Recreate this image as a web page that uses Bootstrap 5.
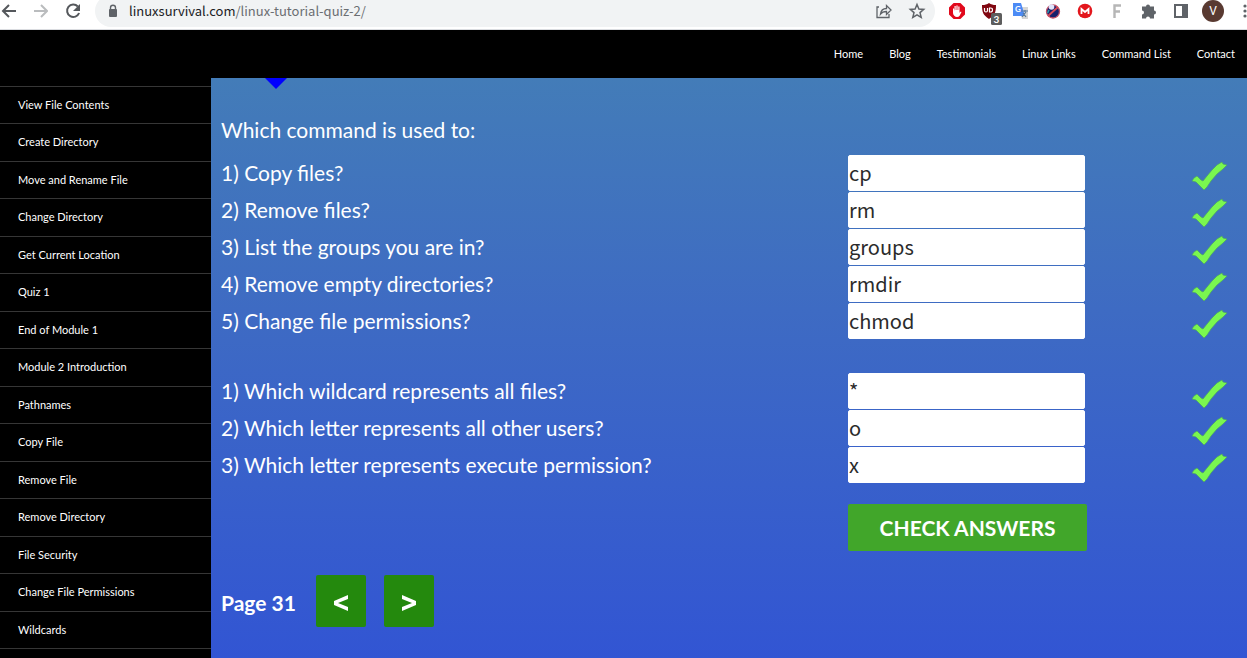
<!DOCTYPE html>
<html lang="en">
<head>
<meta charset="utf-8">
<meta name="viewport" content="width=device-width, initial-scale=1">
<title>Linux Survival - Quiz 2</title>
<link href="https://cdn.jsdelivr.net/npm/bootstrap@5.3.0/dist/css/bootstrap.min.css" rel="stylesheet">
<style>
  body { font-family: Lato, "Liberation Sans", sans-serif; background: #000; color: #fff; }

  /* Browser toolbar */
  .toolbar { height: 30px; background: #fff; border-bottom: 1px solid #dadce0; overflow: hidden; padding-bottom: 7px; }
  .tool-btn { width: 20px; height: 20px; flex: none; padding: 0; border: 0; background: none; display: block; line-height: 0; }
  .tool-btn svg { display: block; width: 20px; height: 20px; }
  .menu-btn { width: 12px; }
  .tool-group { gap: 12px; }
  .address { height: 32px; background: #f1f3f4; border-radius: 16px; padding: 0 8px 0 11px; gap: 9px; margin: 0 12px 0 11px; }
  .url { font: 13px/20px "Noto Sans CJK SC", "Noto Sans", sans-serif; color: #6b6e72; }
  .url b { font-weight: 400; color: #202124; }

  /* Site header */
  .site-head { height: 48px; padding: 0 12px; gap: 26px; }
  .site-head a, .lessons a { font-size: 11px; line-height: 16px; color: #fff; text-decoration: none; }

  /* Lesson list */
  .lessons { width: 211px; padding-top: 8px; }
  .lessons ul { border-top: 1px solid #363636; }
  .lessons li { height: 37px; border-bottom: 1px solid #363636; }
  .lessons li:nth-child(even) { height: 38px; }
  .lessons a { padding: 10px 18px; }

  /* Quiz */
  .quiz { background: linear-gradient(#437cb8, #3e6bc3 40%, #3255d3); font-size: 21px; line-height: 36px; padding: 34px 0 30px 10px; min-height: 580px; }
  .pointer { position: absolute; top: 0; left: 54px; border: 11px solid transparent; border-top-color: #00f; border-bottom: 0; }
  .lead-in { margin-bottom: 7px; }
  .question { min-height: 36px; margin-bottom: 1px; }
  .question svg { width: 37px; height: 30px; }
  .answer { width: 237px; height: 36px; padding: 0 0 2px; border: 1px solid #fff; border-radius: 2px; background: #fff; color: #2b2b2b; font: 20px/32px "Noto Sans CJK SC", sans-serif; }
  .answer-col { width: 399px; flex: none; }
  .result { padding-right: 19px; }
  .second-set { margin-top: 34px; }
  .check-row { margin-top: 21px; }
  .check-btn { width: 239px; height: 47px; border: 0; border-radius: 2px; background: #41a62a; color: #fff; font-weight: 700; }
  .pager { margin-top: 24px; gap: 18px; }
  .page-no { padding: 4px 2px 0 0; }
  .page-btn { width: 50px; height: 52px; padding: 0; border: 0; border-radius: 2px; background: #24890d; line-height: 20px; }
  .page-btn svg { width: 16px; height: 18px; }
</style>
</head>
<body>
<svg class="d-none">
  <symbol id="tick" viewBox="0 0 37 30">
    <path d="M1 20 3 17 6 15 8 17 10 19 12 20 16 15 21 9 26 4 31 1 32 3 36 4 32 8 26 13 20 20 16 26 13 29 9 25 5 21Z" fill="#7af74f" stroke="#4aa563" stroke-width=".7"/>
  </symbol>
</svg>

<div class="toolbar d-flex align-items-center">
  <button class="tool-btn" aria-label="Back"><svg viewBox="0 0 20 20" fill="none" stroke="#55585c" stroke-width="2"><path d="M16 10H3M9 4 3 10l6 6"/></svg></button>
  <button class="tool-btn ms-2 me-2" aria-label="Forward"><svg viewBox="0 0 20 20" fill="none" stroke="#babcbe" stroke-width="2"><path d="M6 10h13M13 4l6 6-6 6"/></svg></button>
  <button class="tool-btn ms-2" aria-label="Reload"><svg viewBox="0 0 20 20"><path d="M13.800 5.500A6.200 6.200 0 1 0 15.100 12" fill="none" stroke="#55585c" stroke-width="2"/><path d="M16 3v7H9z" fill="#55585c"/></svg></button>
  <div class="address d-flex align-items-center flex-grow-1">
    <svg width="14" height="14" viewBox="0 0 14 14"><path d="M4.500 6V3.800a2.500 2.500 0 0 1 5 0V6" fill="none" stroke="#5f6368" stroke-width="1.400"/><rect x="3" y="5" width="8" height="8" rx="1" fill="#5f6368"/></svg>
    <span class="url flex-grow-1"><b>linuxsurvival.com</b>/linux-tutorial-quiz-2/</span>
    <button class="tool-btn me-1" aria-label="Share"><svg viewBox="0 0 20 20" fill="none" stroke="#5f6368" stroke-width="1.300"><path d="M5 6H3v10.500h12V13M6.500 13c.5-4 3-5.500 6-5.500V4.500L17 9l-4.500 4.500v-3c-3 0-4.500.5-6 2.500z"/></svg></button>
    <button class="tool-btn" aria-label="Bookmark"><svg viewBox="0 0 20 20" fill="none" stroke="#5f6368" stroke-width="1.500"><path d="m10 3.500 1.900 4.500 4.800.4-3.700 3.200 1.200 4.800-4.200-2.600-4.200 2.600L7 11.600 3.300 8.400 8.100 8z"/></svg></button>
  </div>
  <div class="tool-group d-flex">
    <button class="tool-btn" aria-label="Ad blocker"><svg viewBox="0 0 20 20"><path d="M6.600 2h6.800L18 6.600v6.800L13.400 18H6.600L2 13.400V6.600z" fill="#e1091c"/><path d="M6 7.500V12c0 2 2 4 4 4 2.500 0 3-2 4.500-5-1-.7-1.500 0-2 1V5.500h-1.200V9h-.7V4.500H9.400V9h-.7V5H7.500v5L7 7.500z" fill="#fff"/></svg></button>
    <button class="tool-btn" aria-label="Content shield, 3 blocked"><svg viewBox="0 0 20 20" overflow="visible"><path d="M10 2c2 1.500 4 2 7 2 0 7-1 10-7 14C4 14 3 11 3 4c3 0 5-.5 7-2z" fill="#800610"/><path d="M5.500 7v2.500q0 1.500 1.500 1.500t1.500-1.500V7m2 0v4h1q2 0 2-2t-2-2z" fill="none" stroke="#fff" stroke-width="1.200"/><rect x="12" y="12" width="11" height="12" rx="1.500" fill="#5d5d5d"/><text x="14.500" y="22" font-size="10" font-weight="700" fill="#fff">3</text></svg></button>
    <button class="tool-btn" aria-label="Translate"><svg viewBox="0 0 20 20"><path d="M8 6h9v12h-6z" fill="#d5d5d5"/><path d="M2 2h8l4 13H2z" fill="#4c8bf5"/><path d="M10 10h7m-3-1v2m-3 5 4-5m-3 1 3 4" stroke="#56789c" stroke-width="1.200"/><text x="4" y="11" font-size="8" font-weight="700" fill="#fff">G</text></svg></button>
    <button class="tool-btn" aria-label="Blocker"><svg viewBox="0 0 20 20"><circle cx="10" cy="10.500" r="6.500" fill="#17216c" stroke="#c05068" stroke-width="1.300"/><path d="m5 15 10-9" stroke="#d94a56" stroke-width="1.800"/><circle cx="8.500" cy="6" r="2.800" fill="#e1e4fa"/><path d="M6 9 4.500 12" stroke="#3399aa" stroke-width="1.500"/></svg></button>
    <button class="tool-btn" aria-label="Mega"><svg viewBox="0 0 20 20"><circle cx="10" cy="10" r="7.300" fill="#e3161c"/><path d="M6.500 13V8l3.500 3 3.500-3v5" fill="none" stroke="#fff" stroke-width="1.800"/></svg></button>
    <button class="tool-btn" aria-label="Fonts"><svg viewBox="0 0 20 20"><path d="M7.500 17V4.500H14M7.500 10.500h5.500" fill="none" stroke="#b6b6b6" stroke-width="2.400"/></svg></button>
    <button class="tool-btn" aria-label="Extensions"><svg viewBox="0 0 20 20"><path d="M3 5.500h4a2 2 0 1 1 4 0h4v4a2 2 0 1 1 0 4v4h-4a2 2 0 0 0-4 0H3v-4a2 2 0 0 0 0-4z" fill="#5f6368"/></svg></button>
    <button class="tool-btn" aria-label="Side panel"><svg viewBox="0 0 20 20"><path d="M3 3h14v14H3z" fill="#5f6368"/><path d="M5 5h6v10H5z" fill="#fff"/></svg></button>
    <button class="tool-btn" aria-label="Profile"><svg viewBox="0 0 20 20" overflow="visible"><circle cx="10" cy="10" r="11" fill="#593a31"/><text x="10" y="14" font-size="12" text-anchor="middle" fill="#fff" font-family="Roboto, sans-serif">V</text></svg></button>
    <button class="tool-btn menu-btn" aria-label="Menu"><svg viewBox="0 0 20 20" fill="#5f6368"><circle cx="10" cy="5" r="1.600"/><circle cx="10" cy="10" r="1.600"/><circle cx="10" cy="15" r="1.600"/></svg></button>
  </div>
</div>

<header>
  <nav class="site-head d-flex align-items-center justify-content-end" aria-label="Site">
    <a href="#">Home</a><a href="#">Blog</a><a href="#">Testimonials</a><a href="#">Linux Links</a><a href="#">Command List</a><a href="#">Contact</a>
  </nav>
</header>

<div class="d-flex">
  <nav class="lessons flex-shrink-0" aria-label="Lessons">
    <ul class="list-unstyled mb-0">
      <li><a class="d-block" href="#">View File Contents</a></li>
      <li><a class="d-block" href="#">Create Directory</a></li>
      <li><a class="d-block" href="#">Move and Rename File</a></li>
      <li><a class="d-block" href="#">Change Directory</a></li>
      <li><a class="d-block" href="#">Get Current Location</a></li>
      <li><a class="d-block" href="#">Quiz 1</a></li>
      <li><a class="d-block" href="#">End of Module 1</a></li>
      <li><a class="d-block" href="#">Module 2 Introduction</a></li>
      <li><a class="d-block" href="#">Pathnames</a></li>
      <li><a class="d-block" href="#">Copy File</a></li>
      <li><a class="d-block" href="#">Remove File</a></li>
      <li><a class="d-block" href="#">Remove Directory</a></li>
      <li><a class="d-block" href="#">File Security</a></li>
      <li><a class="d-block" href="#">Change File Permissions</a></li>
      <li><a class="d-block" href="#">Wildcards</a></li>
    </ul>
  </nav>

  <main class="quiz flex-grow-1 position-relative">
    <span class="pointer"></span>
    <form>
      <p class="lead-in">Which command is used to:</p>
      <div class="question d-flex"><label class="flex-grow-1" for="q1">1) Copy files?</label><div class="answer-col d-flex justify-content-between"><input class="answer" id="q1" value="cp"><span class="result d-flex align-items-end"><svg><use href="#tick"/></svg></span></div></div>
      <div class="question d-flex"><label class="flex-grow-1" for="q2">2) Remove files?</label><div class="answer-col d-flex justify-content-between"><input class="answer" id="q2" value="rm"><span class="result d-flex align-items-end"><svg><use href="#tick"/></svg></span></div></div>
      <div class="question d-flex"><label class="flex-grow-1" for="q3">3) List the groups you are in?</label><div class="answer-col d-flex justify-content-between"><input class="answer" id="q3" value="groups"><span class="result d-flex align-items-end"><svg><use href="#tick"/></svg></span></div></div>
      <div class="question d-flex"><label class="flex-grow-1" for="q4">4) Remove empty directories?</label><div class="answer-col d-flex justify-content-between"><input class="answer" id="q4" value="rmdir"><span class="result d-flex align-items-end"><svg><use href="#tick"/></svg></span></div></div>
      <div class="question d-flex"><label class="flex-grow-1" for="q5">5) Change file permissions?</label><div class="answer-col d-flex justify-content-between"><input class="answer" id="q5" value="chmod"><span class="result d-flex align-items-end"><svg><use href="#tick"/></svg></span></div></div>

      <div class="second-set">
        <div class="question d-flex"><label class="flex-grow-1" for="w1">1) Which wildcard represents all files?</label><div class="answer-col d-flex justify-content-between"><input class="answer" id="w1" value="*"><span class="result d-flex align-items-end"><svg><use href="#tick"/></svg></span></div></div>
        <div class="question d-flex"><label class="flex-grow-1" for="w2">2) Which letter represents all other users?</label><div class="answer-col d-flex justify-content-between"><input class="answer" id="w2" value="o"><span class="result d-flex align-items-end"><svg><use href="#tick"/></svg></span></div></div>
        <div class="question d-flex"><label class="flex-grow-1" for="w3">3) Which letter represents execute permission?</label><div class="answer-col d-flex justify-content-between"><input class="answer" id="w3" value="x"><span class="result d-flex align-items-end"><svg><use href="#tick"/></svg></span></div></div>
      </div>

      <div class="check-row d-flex justify-content-end">
        <div class="answer-col"><button class="check-btn d-block" type="button">CHECK ANSWERS</button></div>
      </div>
    </form>

    <div class="pager d-flex align-items-center">
      <strong class="page-no">Page 31</strong>
      <button class="page-btn" type="button" aria-label="Previous page"><svg viewBox="0 0 16 18"><path d="M15 1v4L5 9l10 4v4L1 11V7z" fill="#fff"/></svg></button>
      <button class="page-btn" type="button" aria-label="Next page"><svg viewBox="0 0 16 18"><path d="M1 1v4l10 4-10 4v4l14-6V7z" fill="#fff"/></svg></button>
    </div>
  </main>
</div>
<script src="https://cdn.jsdelivr.net/npm/bootstrap@5.3.0/dist/js/bootstrap.bundle.min.js"></script>
</body>
</html>
